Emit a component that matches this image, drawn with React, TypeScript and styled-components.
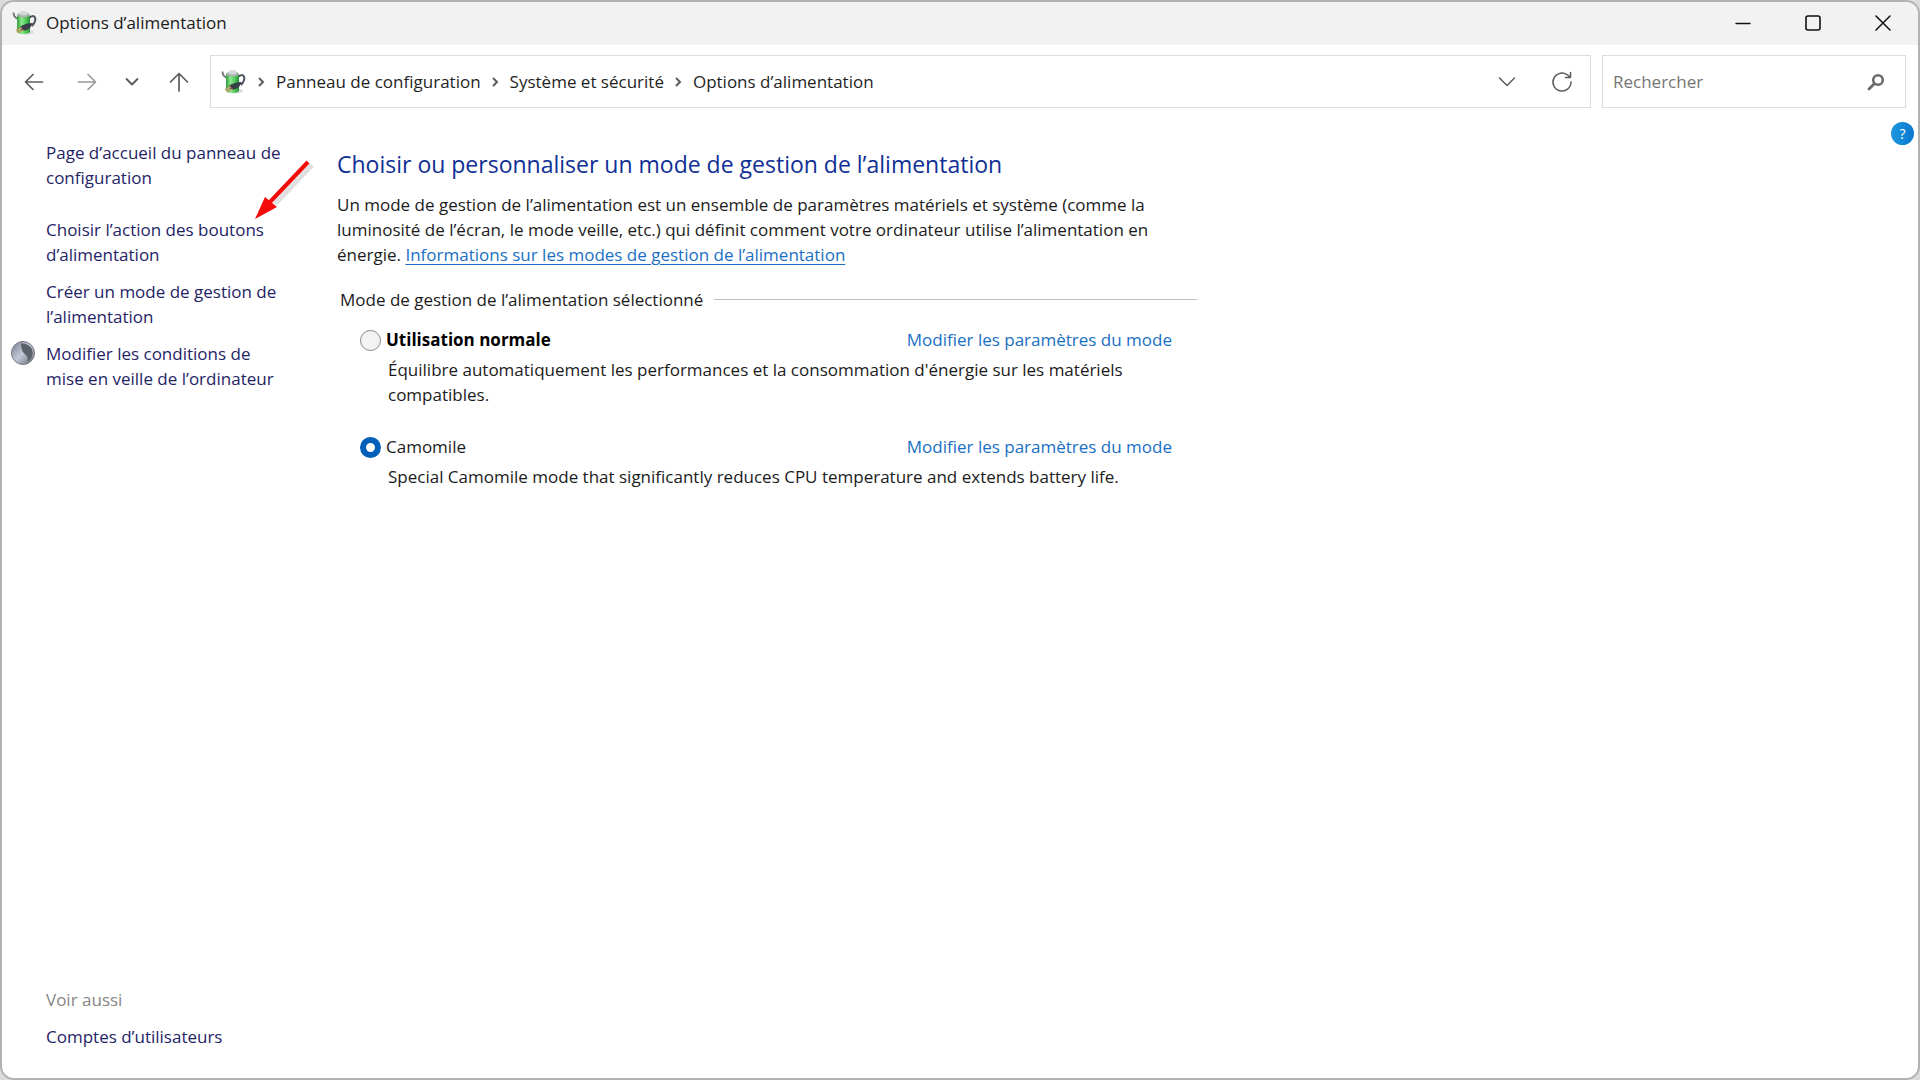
import React, { useState } from "react";
import styled, { createGlobalStyle } from "styled-components";

const GlobalStyle = createGlobalStyle`
  *, *::before, *::after { box-sizing: border-box; }
  html, body { margin: 0; padding: 0; background: #dcdcda; }
  body, button, input { font-family: "Open Sans", "Noto Sans", sans-serif; font-size: 17px; }
  body { line-height: 25px; color: #1b1b1b; }
`;

const Window = styled.div`
  display: flex;
  flex-direction: column;
  min-height: 100vh;
  border: 2px solid #b2b2b0;
  border-radius: 14px;
  background: #fff;
  overflow: hidden;
`;

const TitleBar = styled.header`
  display: flex;
  align-items: center;
  justify-content: space-between;
  height: 43px;
  padding-left: 10px;
  background: #f2f2f2;
`;

const TitleLabel = styled.div`
  display: flex;
  align-items: center;
  gap: 8px;
  padding-bottom: 2px;
`;

const WindowTitle = styled.h1`
  margin: 0;
  font-size: 17px;
  font-weight: 400;
  line-height: 25px;
`;

const WindowControls = styled.div`
  display: flex;
  height: 100%;
`;

const IconButton = styled.button<{ $width: number; $color?: string }>`
  display: flex;
  align-items: center;
  justify-content: center;
  flex: none;
  width: ${(p) => p.$width}px;
  height: 41px;
  padding: 0;
  border: 0;
  background: transparent;
  color: ${(p) => p.$color ?? "#5c5c5c"};
`;

const Toolbar = styled.div`
  display: flex;
  align-items: center;
  gap: 11px;
  padding: 10px 12px 10px 8px;
`;

const NavButtons = styled.nav`
  display: flex;
  width: 189px;
`;

const AddressBar = styled.div`
  display: flex;
  flex: 1;
  align-items: center;
  justify-content: space-between;
  height: 53px;
  padding-left: 10px;
  border: 1px solid #dcdcdc;
`;

const Breadcrumb = styled.ol`
  display: flex;
  align-items: center;
  margin: 0;
  padding: 0;
  list-style: none;
`;

const Crumb = styled.li`
  display: flex;
  align-items: center;
`;

const CrumbLink = styled.a`
  color: #1f1f1f;
  text-decoration: none;
`;

const CrumbChevron = styled.svg`
  width: 29px;
  height: 12px;
`;

const AddressActions = styled.div`
  display: flex;
`;

const SearchBox = styled.form`
  display: flex;
  align-items: center;
  width: 304px;
  height: 53px;
  padding: 0 20px 0 10px;
  border: 1px solid #dcdcdc;
`;

const SearchInput = styled.input`
  flex: 1;
  min-width: 0;
  height: 32px;
  padding: 0;
  border: 0;
  outline: 0;
  background: transparent;
  color: #1f1f1f;
  &::placeholder { color: #757575; opacity: 1; }
`;

const Body = styled.div`
  display: flex;
  flex: 1;
`;

const Sidebar = styled.aside`
  display: flex;
  flex-direction: column;
  flex: none;
  width: 335px;
  padding: 22px 52px 29px 8px;
`;

const SideLinks = styled.ul<{ $top?: number }>`
  display: flex;
  flex-direction: column;
  gap: 12px;
  margin: ${(p) => p.$top ?? 0}px 0 0;
  padding: 0;
  list-style: none;
`;

const SideItem = styled.li`
  position: relative;
  display: grid;
  grid-template-columns: 24px 1fr;
  gap: 12px;
  align-items: start;
`;

const SideLink = styled.a`
  grid-column: 2;
  color: #1f2466;
  text-decoration: none;
`;

const SideBottom = styled.div`
  display: flex;
  flex-direction: column;
  gap: 12px;
  margin-top: auto;
`;

const SeeAlso = styled.span`
  padding-left: 36px;
  color: #858585;
`;

const Pointer = styled.svg`
  position: absolute;
  top: -60px;
  left: 240px;
  width: 66px;
  height: 70px;
  pointer-events: none;
`;

const Main = styled.main`
  flex: 0 1 860px;
  min-width: 0;
  padding-top: 30px;
`;

const Heading = styled.h2`
  margin: 0 0 12px;
  color: #102f95;
  font-size: 23px;
  font-weight: 400;
  line-height: 32px;
`;

const Intro = styled.p`
  max-width: 820px;
  margin: 0;
`;

const InfoLink = styled.a`
  color: #1a6fc4;
  text-underline-offset: 3px;
`;

const PlanGroup = styled.fieldset`
  min-width: 0;
  margin: 20px 0 0;
  padding: 0 0 0 3px;
  border: 0;
`;

const PlanLegend = styled.legend`
  display: flex;
  align-items: center;
  gap: 11px;
  width: 100%;
  padding: 0;
  &::after { content: ""; flex: 1; height: 1px; background: #bdbdbd; }
`;

const Plan = styled.div<{ $top: number }>`
  margin-top: ${(p) => p.$top}px;
  padding-left: 20px;
`;

const PlanHead = styled.div`
  display: flex;
  justify-content: space-between;
  padding-right: 25px;
`;

const PlanLabel = styled.label<{ $strong?: boolean }>`
  display: flex;
  align-items: center;
  gap: 5px;
  color: ${(p) => (p.$strong ? "#000" : "#1b1b1b")};
  font-weight: ${(p) => (p.$strong ? 700 : 400)};
`;

const Radio = styled.input`
  appearance: none;
  width: 21px;
  height: 21px;
  margin: 2px 0 0;
  border: 1px solid #858585;
  border-radius: 50%;
  background: #f3f3f3;
  &:checked { border: 6px solid #005fb8; background: #fff; }
`;

const PlanLink = styled.a`
  color: #1a6fc4;
  text-decoration: none;
`;

const PlanText = styled.p`
  max-width: 770px;
  margin: 5px 0 0 28px;
`;

const HelpColumn = styled.div`
  display: flex;
  flex: 1;
  align-items: flex-start;
  justify-content: flex-end;
  padding: 4px 4px 0 0;
`;

const HelpButton = styled.button`
  width: 23px;
  height: 23px;
  padding: 0;
  border: 0;
  border-radius: 50%;
  background: linear-gradient(90deg, #1e97dd, #0878d0);
  color: #fff;
  font-size: 14px;
  line-height: 23px;
`;

function PowerIcon({ id }: { id: string }) {
  return (
    <svg width="26" height="26" viewBox="0 0 26 26" aria-hidden="true">
      <defs>
        <linearGradient id={id} x1="0" x2="1">
          <stop offset="0" stopColor="#2f9a3c" />
          <stop offset=".35" stopColor="#8ce88a" />
          <stop offset=".7" stopColor="#4fca58" />
          <stop offset="1" stopColor="#238a34" />
        </linearGradient>
      </defs>
      <ellipse cx="14" cy="22" rx="8" ry="2.500" fill="#d8dcd8" />
      <path d="M1.500 2.500Q1.500 7 6 9" fill="none" stroke="#6b747d" strokeWidth="1.800" />
      <path d="M17 8Q21 4.500 23 7.500 24.500 11 20 16" fill="none" stroke="#4a4f60" strokeWidth="2" />
      <path d="M5 5v16q0 3 6.500 3t6.500-3V5z" fill={`url(#${id})`} />
      <ellipse cx="11.500" cy="5" rx="6.500" ry="2.600" fill="#a9b2ae" />
      <ellipse cx="11.500" cy="3.300" rx="4" ry="2.200" fill="#d3d8d8" />
      <path d="M8 17q5-4 13-4l-3 5q-5 4-9 2z" fill="#3a3e48" />
      <path d="M4 20.500l6-2.500M5.500 22.500l6-2.500" stroke="#c9a068" strokeWidth="1.500" />
    </svg>
  );
}

function Chevron() {
  return (
    <CrumbChevron viewBox="0 0 29 12" fill="none" stroke="#5c5c5c" strokeWidth="2" aria-hidden="true">
      <path d="M12 2l4 4-4 4" />
    </CrumbChevron>
  );
}

const crumbs = ["Panneau de configuration", "Système et sécurité", "Options d’alimentation"];

const plans = [
  {
    name: "Utilisation normale",
    text: "Équilibre automatiquement les performances et la consommation d'énergie sur les matériels compatibles.",
    strong: true,
    top: 15,
  },
  {
    name: "Camomile",
    text: "Special Camomile mode that significantly reduces CPU temperature and extends battery life.",
    strong: false,
    top: 27,
  },
];

export default function App() {
  const [plan, setPlan] = useState("Camomile");
  const line = { fill: "none", stroke: "currentColor", strokeLinecap: "round", strokeLinejoin: "round" } as const;

  return (
    <>
      <GlobalStyle />
      <Window>
        <TitleBar>
          <TitleLabel>
            <PowerIcon id="can-title" />
            <WindowTitle>Options d’alimentation</WindowTitle>
          </TitleLabel>
          <WindowControls>
            <IconButton $width={70} $color="#111" aria-label="Réduire">
              <svg width="16" height="16" {...line} strokeWidth="1.300"><path d="M1 8.500h14" /></svg>
            </IconButton>
            <IconButton $width={70} $color="#111" aria-label="Agrandir">
              <svg width="16" height="16" {...line} strokeWidth="1.600"><rect x="1" y="1" width="14" height="14" rx="2" /></svg>
            </IconButton>
            <IconButton $width={70} $color="#111" aria-label="Fermer">
              <svg width="16" height="16" {...line} strokeWidth="1.500"><path d="M1 1l14 14M15 1L1 15" /></svg>
            </IconButton>
          </WindowControls>
        </TitleBar>

        <Toolbar>
          <NavButtons aria-label="Navigation">
            <IconButton $width={48} aria-label="Précédent">
              <svg width="20" height="20" {...line} strokeWidth="1.700"><path d="M18.500 10H2M9 2.500L1.500 10 9 17.500" /></svg>
            </IconButton>
            <IconButton $width={58} $color="#9a9a9a" aria-label="Suivant">
              <svg width="20" height="20" {...line} strokeWidth="1.700"><path d="M1.500 10H18M11 2.500L18.500 10 11 17.500" /></svg>
            </IconButton>
            <IconButton $width={32} aria-label="Emplacements récents">
              <svg width="14" height="10" {...line} strokeWidth="1.900"><path d="M1.500 2L7 7.500 12.500 2" /></svg>
            </IconButton>
            <IconButton $width={61} aria-label="Dossier parent">
              <svg width="20" height="22" {...line} strokeWidth="1.700"><path d="M10 20V2.500M1.500 11L10 2.500 18.500 11" /></svg>
            </IconButton>
          </NavButtons>
          <AddressBar>
            <Breadcrumb>
              <Crumb><PowerIcon id="can-address" /></Crumb>
              {crumbs.map((crumb) => (
                <Crumb key={crumb}>
                  <Chevron />
                  <CrumbLink href="#">{crumb}</CrumbLink>
                </Crumb>
              ))}
            </Breadcrumb>
            <AddressActions>
              <IconButton $width={54} aria-label="Afficher la liste">
                <svg width="18" height="12" {...line} strokeWidth="1.500"><path d="M1.500 2L9 9.500 16.500 2" /></svg>
              </IconButton>
              <IconButton $width={56} aria-label="Actualiser">
                <svg width="22" height="22" {...line} strokeWidth="1.500"><path d="M20 11a9 9 0 1 1-3-6.700l2 2M19.500 1.500v5h-5" /></svg>
              </IconButton>
            </AddressActions>
          </AddressBar>
          <SearchBox role="search">
            <SearchInput type="search" aria-label="Rechercher" placeholder="Rechercher" />
            <svg width="18" height="18" {...line} stroke="#6a6a6a" aria-hidden="true">
              <circle cx="11" cy="7" r="4.800" strokeWidth="2.600" />
              <path d="M7.500 10.500L2 16" strokeWidth="2.800" />
            </svg>
          </SearchBox>
        </Toolbar>

        <Body>
          <Sidebar>
            <SideLinks>
              <SideItem><SideLink href="#">Page d’accueil du panneau de configuration</SideLink></SideItem>
            </SideLinks>
            <SideLinks $top={27}>
              <SideItem>
                <SideLink href="#">Choisir l’action des boutons d’alimentation</SideLink>
                <Pointer viewBox="0 0 66 70" aria-hidden="true">
                  <path d="M59 5L22 44" stroke="#000" strokeOpacity=".12" strokeWidth="5" transform="translate(3 3)" />
                  <path d="M58 5L20 45" stroke="#f50a0a" strokeWidth="4" />
                  <path d="M5 62L15 40L27 50z" fill="#f50a0a" />
                </Pointer>
              </SideItem>
              <SideItem><SideLink href="#">Créer un mode de gestion de l’alimentation</SideLink></SideItem>
              <SideItem>
                <svg width="26" height="24" viewBox="0 0 26 24" aria-hidden="true">
                  <defs>
                    <linearGradient id="moon" x1="0" y1="0" x2="1" y2="1">
                      <stop offset="0" stopColor="#777b88" />
                      <stop offset=".5" stopColor="#c3c8da" />
                      <stop offset="1" stopColor="#62656d" />
                    </linearGradient>
                  </defs>
                  <circle cx="13" cy="12" r="11.500" fill="url(#moon)" stroke="#777983" />
                  <path d="M11 2.500Q23 3 22.500 13 21 20 17 20.500 19 17 16 14 11 11 11 2.500z" fill="#5c6069" />
                </svg>
                <SideLink href="#">Modifier les conditions de mise en veille de l’ordinateur</SideLink>
              </SideItem>
            </SideLinks>
            <SideBottom>
              <SeeAlso>Voir aussi</SeeAlso>
              <SideItem as="div"><SideLink href="#">Comptes d’utilisateurs</SideLink></SideItem>
            </SideBottom>
          </Sidebar>

          <Main>
            <Heading>Choisir ou personnaliser un mode de gestion de l’alimentation</Heading>
            <Intro>
              Un mode de gestion de l’alimentation est un ensemble de paramètres matériels et système (comme la
              luminosité de l’écran, le mode veille, etc.) qui définit comment votre ordinateur utilise l’alimentation en
              énergie. <InfoLink href="#">Informations sur les modes de gestion de l’alimentation</InfoLink>
            </Intro>
            <PlanGroup>
              <PlanLegend>Mode de gestion de l’alimentation sélectionné</PlanLegend>
              {plans.map((p) => (
                <Plan key={p.name} $top={p.top}>
                  <PlanHead>
                    <PlanLabel $strong={p.strong}>
                      <Radio type="radio" name="plan" checked={plan === p.name} onChange={() => setPlan(p.name)} />
                      {p.name}
                    </PlanLabel>
                    <PlanLink href="#">Modifier les paramètres du mode</PlanLink>
                  </PlanHead>
                  <PlanText>{p.text}</PlanText>
                </Plan>
              ))}
            </PlanGroup>
          </Main>

          <HelpColumn>
            <HelpButton aria-label="Aide">?</HelpButton>
          </HelpColumn>
        </Body>
      </Window>
    </>
  );
}
